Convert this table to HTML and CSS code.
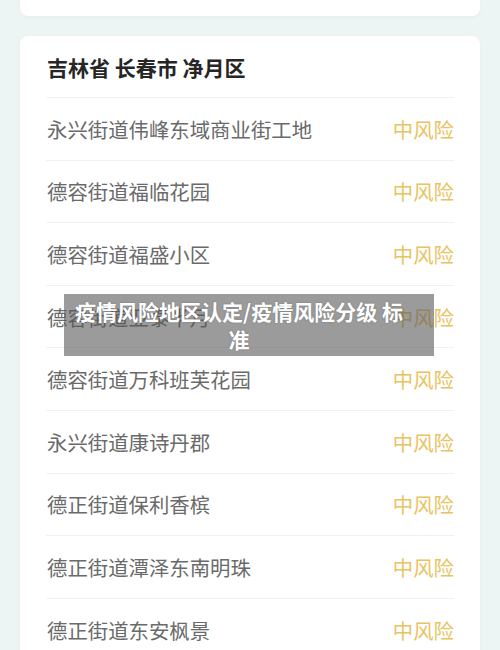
FILE: index.html
```html
<!DOCTYPE html>
<html lang="zh-CN">

<head>
    <meta charset="UTF-8">
    <meta name="viewport" content="width=device-width, initial-scale=1.0">
    <title>疫情风险地区认定/疫情风险分级标准</title>
    <link rel="stylesheet" href="styles.css">
</head>

<body>
    <div id="page">
        <!-- 上一张卡片只露出底部 -->
        <div class="card card-prev"></div>

        <div class="card">
            <div class="card-title">吉林省 长春市 净月区</div>
            <ul class="area-list">
                <li class="area-row"><span class="area-name">永兴街道伟峰东域商业街工地</span><span class="area-risk">中风险</span></li>
                <li class="area-row"><span class="area-name">德容街道福临花园</span><span class="area-risk">中风险</span></li>
                <li class="area-row"><span class="area-name">德容街道福盛小区</span><span class="area-risk">中风险</span></li>
                <li class="area-row"><span class="area-name">德容街道亚泰半月</span><span class="area-risk">中风险</span></li>
                <li class="area-row"><span class="area-name">德容街道万科班芙花园</span><span class="area-risk">中风险</span></li>
                <li class="area-row"><span class="area-name">永兴街道康诗丹郡</span><span class="area-risk">中风险</span></li>
                <li class="area-row"><span class="area-name">德正街道保利香槟</span><span class="area-risk">中风险</span></li>
                <li class="area-row"><span class="area-name">德正街道潭泽东南明珠</span><span class="area-risk">中风险</span></li>
                <li class="area-row"><span class="area-name">德正街道东安枫景</span><span class="area-risk">中风险</span></li>
            </ul>
        </div>
    </div>

    <!-- 图片上的标题水印 -->
    <div id="caption">疫情风险地区认定/疫情风险分级 标准</div>
</body>

</html>
```

FILE: styles.css
```css
* {
    margin: 0;
    padding: 0;
}

html,
body {
    height: 100%;
    overflow: hidden;
}

body {
    background: #edf4f4;
    font-family: "Noto Sans CJK SC", "Noto Sans", sans-serif;
    position: relative;
}

#page {
    padding: 0 20px;
    display: flex;
    flex-direction: column;
    gap: 20px;
}

.card {
    background: #fff;
    border-radius: 8px;
    padding: 0 26px;
    box-shadow: 0 1px 4px rgba(0, 0, 0, 0.03);
}

.card-prev {
    height: 16px;
    border-radius: 0 0 8px 8px;
}

.card-title {
    height: 61px;
    display: flex;
    align-items: center;
    padding-left: 1px;
    font-size: 21px;
    font-weight: bold;
    color: #262626;
    border-bottom: 1px solid #f0f0f0;
}

.area-list {
    list-style: none;
}

.area-row {
    height: 61.6px;
    display: flex;
    align-items: center;
    justify-content: space-between;
    padding-left: 1px;
    font-size: 20.4px;
    border-bottom: 1px solid #f0f0f0;
}

.area-name {
    color: #6a6a6a;
}

.area-risk {
    color: #e8c35f;
}

#caption {
    position: absolute;
    left: 64px;
    top: 294px;
    width: 370px;
    height: 62px;
    box-sizing: border-box;
    /* 文字略偏左，右边留得多一些 */
    padding: 3px 26px 3px 6px;
    background: rgba(88, 88, 88, 0.6);
    color: #fff;
    font-size: 21px;
    font-weight: bold;
    line-height: 28px;
    text-align: center;
    text-shadow: 0 0 2px rgba(0, 0, 0, 0.25);
}
```
